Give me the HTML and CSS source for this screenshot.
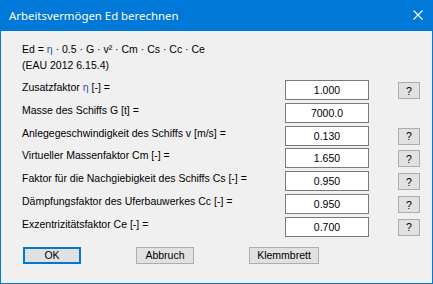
FILE: index.html
```html
<!DOCTYPE html>
<html lang="de">
<head>
  <meta charset="UTF-8">
  <title>Arbeitsvermögen Ed berechnen</title>
  <link rel="stylesheet" href="styles.css">
</head>
<body>
  <div class="dialog">
    <div class="titlebar">
      <span class="title">Arbeitsvermögen Ed berechnen</span>
      <svg class="close" width="10" height="10" viewBox="0 0 10 10">
        <path d="M0.5 0.5 L9.5 9.5 M9.5 0.5 L0.5 9.5" stroke="#fff" stroke-width="1.1" fill="none"/>
      </svg>
    </div>
    <div class="content">
      <div class="formula">
        <div>Ed = <span class="eta">η</span> · 0.5 · G · v² · Cm · Cs · Cc · Ce</div>
        <div>(EAU 2012 6.15.4)</div>
      </div>

      <div class="rows">
        <label>Zusatzfaktor <span class="eta">η</span> [-] =</label>
        <div class="field">1.000</div>
        <button class="help">?</button>

        <label>Masse des Schiffs G [t] =</label>
        <div class="field">7000.0</div>
        <span></span>

        <label>Anlegegeschwindigkeit des Schiffs v [m/s] =</label>
        <div class="field">0.130</div>
        <button class="help">?</button>

        <label>Virtueller Massenfaktor Cm [-] =</label>
        <div class="field">1.650</div>
        <button class="help">?</button>

        <label>Faktor für die Nachgiebigkeit des Schiffs Cs [-] =</label>
        <div class="field">0.950</div>
        <button class="help">?</button>

        <label>Dämpfungsfaktor des Uferbauwerkes Cc [-] =</label>
        <div class="field">0.950</div>
        <button class="help">?</button>

        <label>Exzentrizitätsfaktor Ce [-] =</label>
        <div class="field">0.700</div>
        <button class="help">?</button>
      </div>

      <div class="buttons">
        <button class="btn default">OK</button>
        <button class="btn">Abbruch</button>
        <button class="btn wide">Klemmbrett</button>
      </div>
    </div>
  </div>
</body>
</html>
```

FILE: styles.css
```css
html, body {
  margin: 0;
  padding: 0;
}
body {
  font-family: "Liberation Sans", Arial, sans-serif;
  font-size: 10.5px;
  color: #000;
  background: #f0f0f0;
}
.dialog {
  width: 433px;
  height: 284px;
  box-sizing: border-box;
  border: 1px solid #0078d7;
  border-top: none;
  background: #f0f0f0;
}
.titlebar {
  height: 31px;
  background: #0078d7;
  display: flex;
  align-items: center;
  justify-content: space-between;
  padding: 0 10px 0 9px;
  margin: 0 -1px;
}
.title {
  font-family: "Noto Sans", "Open Sans", sans-serif;
  font-size: 11.4px;
  color: #fff;
  padding-bottom: 1px;
}
.close {
  display: block;
  margin-bottom: 1px;
}
.content {
  padding: 10px 0 0 21px;
}
.formula {
  line-height: 16px;
}
.eta {
  color: #2458a8;
}
.rows {
  display: grid;
  grid-template-columns: 234px 84px 22px;
  column-gap: 29px;
  row-gap: 2.83px;
  margin-top: 7px;
}
.rows label {
  line-height: 15px;
  align-self: start;
  white-space: nowrap;
}
.field {
  height: 20px;
  box-sizing: border-box;
  border: 1px solid #7a7a7a;
  background: #fff;
  text-align: center;
  line-height: 18px;
}
.help {
  height: 17px;
  margin-top: 2px;
}
button {
  font-family: "Liberation Sans", Arial, sans-serif;
  font-size: 10.5px;
  color: #000;
  background: #e1e1e1;
  border: 1px solid #adadad;
  padding: 0;
  box-sizing: border-box;
  line-height: 14px;
}
.buttons {
  display: flex;
  margin-top: 10px;
  padding-left: 1px;
}
.btn {
  width: 58px;
  height: 17px;
  margin-right: 55px;
}
.btn.wide {
  width: 70px;
  margin-right: 0;
}
.btn.default {
  border: 2px solid #0078d7;
  line-height: 13px;
}
```
